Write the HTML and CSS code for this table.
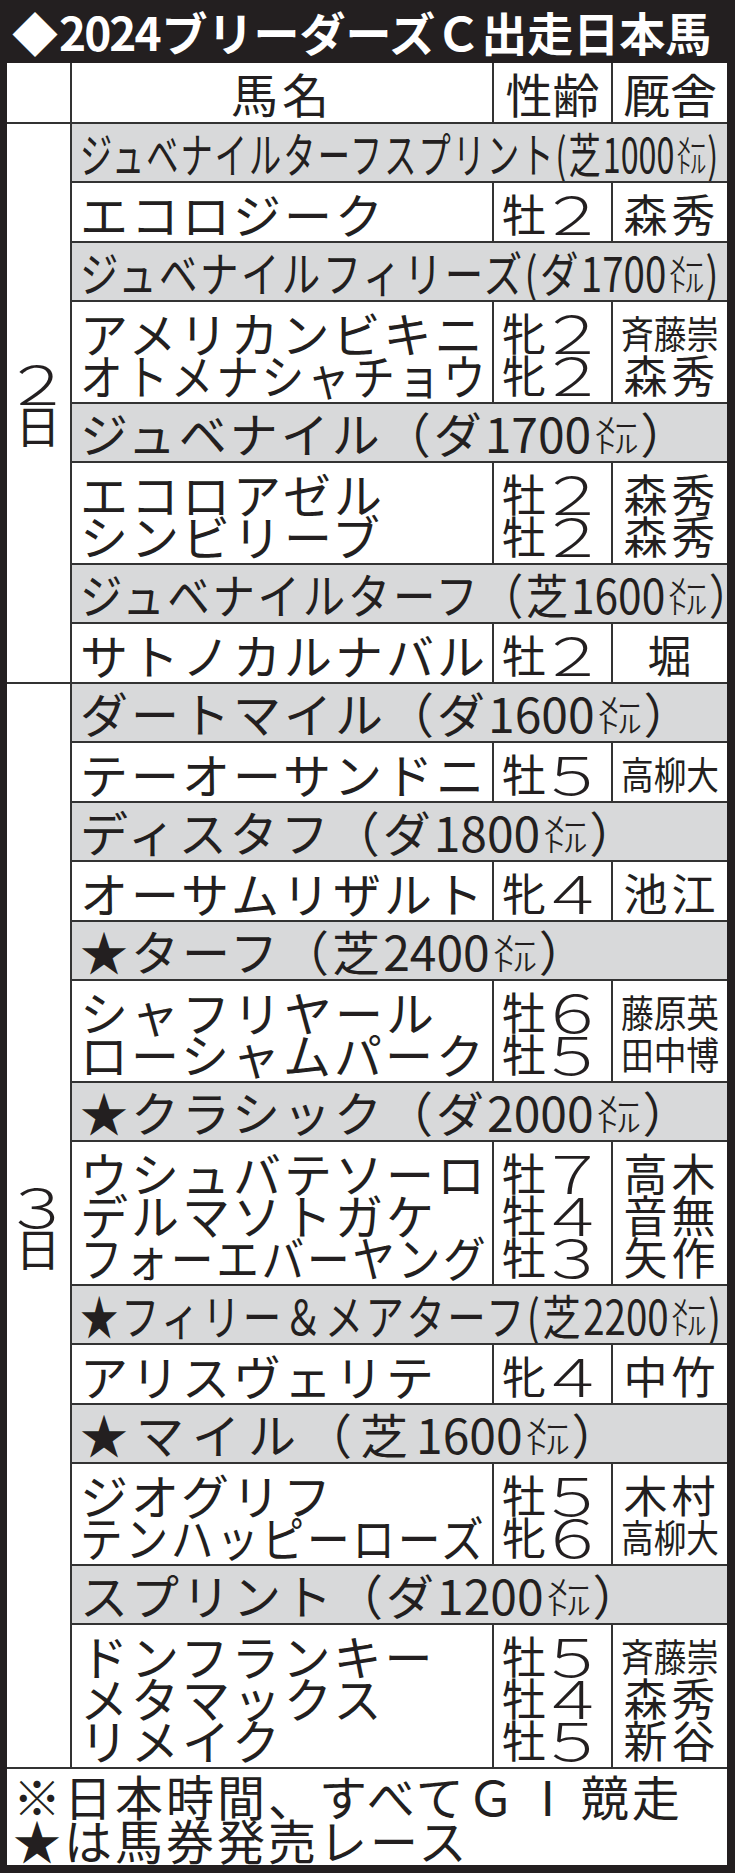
FILE: index.html
```html
<!DOCTYPE html>
<html lang="ja">
<head>
<meta charset="utf-8">
<title>2024ブリーダーズC出走日本馬</title>
<link rel="stylesheet" href="styles.css">
</head>
<body>
<div class="frame">
  <h1 class="title"><span class="dia">◆</span><span class="yr">2024</span>ブリーダーズＣ出走日本馬</h1>
  <div class="board">
    <div class="head">
      <div class="day"></div>
      <div class="hcell hname">馬名</div>
      <div class="hcell hage">性齢</div>
      <div class="hcell htr">厩舎</div>
    </div>

    <div class="sec">
      <div class="day"><span class="n">２</span><span>日</span></div>
      <div class="rows">
        <div class="race"><span class="rt rt-a">ジュベナイルターフスプリント(芝<span class="d">1000</span><span class="unit"><span>メー</span><span>トル</span></span>)</span></div>
        <div class="horse">
          <div class="name"><div class="ln">エコロジーク</div></div>
          <div class="age"><div class="ln">牡<span class="n">２</span></div></div>
          <div class="tr"><div class="ln">森秀</div></div>
        </div>
        <div class="race"><span class="rt rt-b">ジュベナイルフィリーズ(ダ<span class="d">1700</span><span class="unit"><span>メー</span><span>トル</span></span>)</span></div>
        <div class="horse">
          <div class="name"><div class="ln">アメリカンビキニ</div><div class="ln c">オトメナシャチョウ</div></div>
          <div class="age"><div class="ln">牝<span class="n">２</span></div><div class="ln">牝<span class="n">２</span></div></div>
          <div class="tr"><div class="ln sm">斉藤崇</div><div class="ln">森秀</div></div>
        </div>
        <div class="race"><span class="rt">ジュベナイル（ダ<span class="d">1700</span><span class="unit"><span>メー</span><span>トル</span></span>）</span></div>
        <div class="horse">
          <div class="name"><div class="ln">エコロアゼル</div><div class="ln">シンビリーブ</div></div>
          <div class="age"><div class="ln">牡<span class="n">２</span></div><div class="ln">牡<span class="n">２</span></div></div>
          <div class="tr"><div class="ln">森秀</div><div class="ln">森秀</div></div>
        </div>
        <div class="race"><span class="rt rt-c">ジュベナイルターフ（芝<span class="d">1600</span><span class="unit"><span>メー</span><span>トル</span></span>）</span></div>
        <div class="horse">
          <div class="name"><div class="ln">サトノカルナバル</div></div>
          <div class="age"><div class="ln">牡<span class="n">２</span></div></div>
          <div class="tr"><div class="ln">堀</div></div>
        </div>
      </div>
    </div>

    <div class="sec">
      <div class="day"><span class="n">３</span><span>日</span></div>
      <div class="rows">
        <div class="race"><span class="rt">ダートマイル（ダ<span class="d">1600</span><span class="unit"><span>メー</span><span>トル</span></span>）</span></div>
        <div class="horse">
          <div class="name"><div class="ln">テーオーサンドニ</div></div>
          <div class="age"><div class="ln">牡<span class="n">５</span></div></div>
          <div class="tr"><div class="ln sm">高柳大</div></div>
        </div>
        <div class="race"><span class="rt">ディスタフ（ダ<span class="d">1800</span><span class="unit"><span>メー</span><span>トル</span></span>）</span></div>
        <div class="horse">
          <div class="name"><div class="ln">オーサムリザルト</div></div>
          <div class="age"><div class="ln">牝<span class="n">４</span></div></div>
          <div class="tr"><div class="ln">池江</div></div>
        </div>
        <div class="race"><span class="rt">★ターフ（芝<span class="d">2400</span><span class="unit"><span>メー</span><span>トル</span></span>）</span></div>
        <div class="horse">
          <div class="name"><div class="ln">シャフリヤール</div><div class="ln">ローシャムパーク</div></div>
          <div class="age"><div class="ln">牡<span class="n">６</span></div><div class="ln">牡<span class="n">５</span></div></div>
          <div class="tr"><div class="ln sm">藤原英</div><div class="ln sm">田中博</div></div>
        </div>
        <div class="race"><span class="rt">★クラシック（ダ<span class="d">2000</span><span class="unit"><span>メー</span><span>トル</span></span>）</span></div>
        <div class="horse">
          <div class="name"><div class="ln">ウシュバテソーロ</div><div class="ln">デルマソトガケ</div><div class="ln c">フォーエバーヤング</div></div>
          <div class="age"><div class="ln">牡<span class="n">７</span></div><div class="ln">牡<span class="n">４</span></div><div class="ln">牡<span class="n">３</span></div></div>
          <div class="tr"><div class="ln">高木</div><div class="ln">音無</div><div class="ln">矢作</div></div>
        </div>
        <div class="race"><span class="rt rt-b">★フィリー＆メアターフ(芝<span class="d">2200</span><span class="unit"><span>メー</span><span>トル</span></span>)</span></div>
        <div class="horse">
          <div class="name"><div class="ln">アリスヴェリテ</div></div>
          <div class="age"><div class="ln">牝<span class="n">４</span></div></div>
          <div class="tr"><div class="ln">中竹</div></div>
        </div>
        <div class="race"><span class="rt rt-w">★マイル（芝<span class="d">1600</span><span class="unit"><span>メー</span><span>トル</span></span>）</span></div>
        <div class="horse">
          <div class="name"><div class="ln">ジオグリフ</div><div class="ln c">テンハッピーローズ</div></div>
          <div class="age"><div class="ln">牡<span class="n">５</span></div><div class="ln">牝<span class="n">６</span></div></div>
          <div class="tr"><div class="ln">木村</div><div class="ln sm">高柳大</div></div>
        </div>
        <div class="race"><span class="rt">スプリント（ダ<span class="d">1200</span><span class="unit"><span>メー</span><span>トル</span></span>）</span></div>
        <div class="horse">
          <div class="name"><div class="ln">ドンフランキー</div><div class="ln">メタマックス</div><div class="ln">リメイク</div></div>
          <div class="age"><div class="ln">牡<span class="n">５</span></div><div class="ln">牡<span class="n">４</span></div><div class="ln">牡<span class="n">５</span></div></div>
          <div class="tr"><div class="ln sm">斉藤崇</div><div class="ln">森秀</div><div class="ln">新谷</div></div>
        </div>
      </div>
    </div>

    <div class="foot">
      <p>※日本時間、すべて<span class="gi">Ｇ</span><span class="gi">Ⅰ</span>競走</p>
      <p>★は馬券発売レース</p>
    </div>
  </div>
</div>
</body>
</html>
```

FILE: styles.css
```css
html, body {
  margin: 0;
  padding: 0;
  background: #ffffff;
}

.frame {
  width: 735px;
  box-sizing: border-box;
  background: #231f20;
  padding: 0 8px 8px 7px;
  font-family: "Noto Sans CJK JP", "Noto Sans", sans-serif;
  color: #231f20;
  overflow: hidden;
}

/* title bar */
.title {
  margin: 0;
  height: 63px;
  line-height: 63px;
  padding-left: 5px;
  color: #ffffff;
  font-size: 46px;
  font-weight: 700;
  white-space: nowrap;
  letter-spacing: 0;
}

.dia {
  display: inline-block;
  margin-right: 1px;
}

.yr {
  letter-spacing: -2px;
  margin-right: 2px;
}

/* white board */
.board {
  background: #ffffff;
}

.head {
  display: grid;
  grid-template-columns: 65px 422px 119px minmax(0, 1fr);
  height: 59px;
}

.day {
  border-right: 2px solid #333333;
  box-sizing: border-box;
  min-width: 0;
}

.hcell {
  font-size: 47px;
  line-height: 59px;
  text-align: center;
  white-space: nowrap;
  min-width: 0;
}

.hname,
.hage {
  border-right: 2px solid #333333;
}

.hname {
  letter-spacing: 4px;
}

/* day sections */
.sec {
  display: grid;
  grid-template-columns: 65px minmax(0, 1fr);
  border-top: 2px solid #333333;
}

.sec .day {
  display: flex;
  flex-direction: column;
  align-items: center;
  justify-content: center;
  font-size: 45px;
  line-height: 43px;
  padding-right: 1px;
}

.rows {
  min-width: 0;
}

.rows > * + * {
  border-top: 2px solid #333333;
}

/* race title rows */
.race {
  height: 57px;
  background: #d8d9da;
  display: flex;
  align-items: center;
  padding-left: 8px;
  overflow: hidden;
}

.rt {
  display: inline-block;
  font-size: 48px;
  line-height: 57px;
  letter-spacing: 3px;
  white-space: nowrap;
  transform-origin: left center;
}

.rt-a { transform: scaleX(0.672); }
.rt-b { transform: scaleX(0.802); }
.rt-c { transform: scaleX(0.885); }
.rt-w { letter-spacing: 8px; }

.d {
  letter-spacing: 0;
  margin-right: 2px;
}

.unit {
  display: inline-flex;
  flex-direction: column;
  font-size: 24px;
  line-height: 18px;
  letter-spacing: -3px;
  vertical-align: 18px;
  margin: 0 5px 0 0;
}

/* horse rows */
.horse {
  display: grid;
  grid-template-columns: 422px 119px minmax(0, 1fr);
}

.name,
.age,
.tr {
  padding: 9px 0 7px;
  font-size: 48px;
  line-height: 42px;
  white-space: nowrap;
  min-width: 0;
}

.name,
.age {
  border-right: 2px solid #333333;
}

.name {
  padding-left: 8px;
  letter-spacing: 3px;
}

.name .c {
  transform: scaleX(0.89);
  transform-origin: left center;
}

.age {
  font-size: 44px;
  text-align: center;
  letter-spacing: 6px;
  padding-right: 1px;
}

.n {
  display: inline-block;
  font-weight: 300;
  transform: scale(1.55, 1.18);
}

.tr {
  font-size: 44px;
  letter-spacing: 4px;
}

.tr .ln {
  display: flex;
  justify-content: center;
  padding-left: 3px;
}

.tr .sm {
  font-size: 38px;
  letter-spacing: 0;
  padding-left: 0;
  transform: scaleX(0.86);
  transform-origin: center;
}

/* footer */
.foot {
  border-top: 2px solid #333333;
  padding: 4px 0 4px 6px;
  height: 88px;
  font-size: 48px;
  line-height: 44px;
  letter-spacing: 3px;
  white-space: nowrap;
}

.foot p {
  margin: 0;
}

.gi {
  display: inline-block;
  margin-right: 6px;
}
```
